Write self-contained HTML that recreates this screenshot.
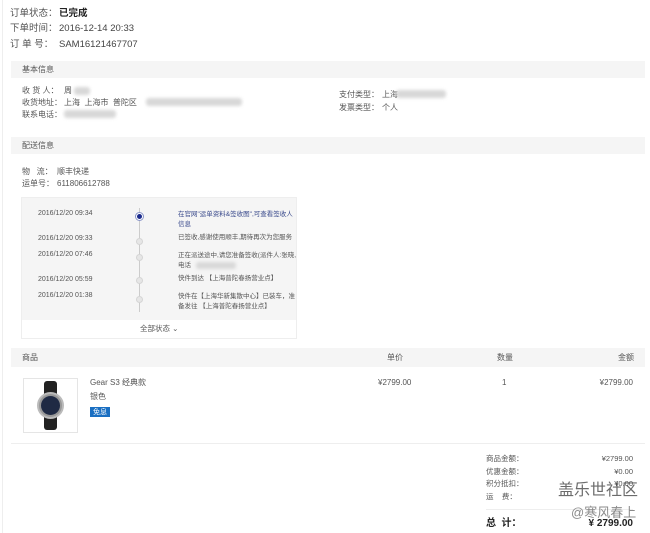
<!DOCTYPE html>
<html><head><meta charset="utf-8"><style>
*{margin:0;padding:0;box-sizing:border-box}
body{width:650px;height:533px;background:#fff;font-family:"Liberation Sans","Noto Sans CJK SC",sans-serif;color:#333;position:relative;overflow:hidden;font-size:8px}
.a{position:absolute;white-space:nowrap;line-height:1}
.bar{position:absolute;left:11px;width:634px;background:#f5f5f5}
.blur{position:absolute;background:#d8d8d8;border-radius:3px;filter:blur(1.5px)}
.g{color:#555}
.dot{position:absolute;left:114px;width:7px;height:7px;border-radius:50%;background:#e6e6e6;border:1px solid #d5d5d5}
</style></head><body>
<div style="position:absolute;left:2px;top:0;width:1px;height:533px;background:#eee"></div>
<div class="a" style="left:10px;top:9px;font-size:9.5px;color:#555">订单状态：</div>
<div class="a" style="left:59px;top:9px;font-size:9.5px;font-weight:bold;color:#222">已完成</div>
<div class="a" style="left:10px;top:24px;font-size:9.5px;color:#555">下单时间：</div>
<div class="a" style="left:59px;top:24px;font-size:9.5px;color:#444">2016-12-14 20:33</div>
<div class="a" style="left:10px;top:40px;font-size:9.5px;color:#555">订 单 号：</div>
<div class="a" style="left:59px;top:40px;font-size:9.5px;color:#444">SAM16121467707</div>

<div class="bar" style="top:61px;height:17px"></div>
<div class="a g" style="left:22px;top:66px">基本信息</div>
<div class="a g" style="left:22px;top:87px">收 货 人：</div><div class="a g" style="left:64px;top:87px">周</div><div class="blur" style="left:74px;top:87px;width:16px;height:8px"></div>
<div class="a g" style="left:22px;top:99px">收货地址：</div><div class="a g" style="left:64px;top:99px">上海 &nbsp;上海市 &nbsp;普陀区</div><div class="blur" style="left:146px;top:98px;width:96px;height:8px"></div>
<div class="a g" style="left:22px;top:111px">联系电话：</div><div class="blur" style="left:64px;top:110px;width:52px;height:8px"></div>
<div class="a g" style="left:339px;top:91px">支付类型：</div><div class="a g" style="left:382px;top:91px">上海</div><div class="blur" style="left:396px;top:90px;width:50px;height:8px"></div>
<div class="a g" style="left:339px;top:104px">发票类型：</div><div class="a g" style="left:382px;top:104px">个人</div>

<div class="bar" style="top:137px;height:17px"></div>
<div class="a g" style="left:22px;top:142px">配送信息</div>
<div class="a g" style="left:22px;top:168px">物 &nbsp;&nbsp;流：</div><div class="a g" style="left:57px;top:168px">顺丰快递</div>
<div class="a g" style="left:22px;top:180px">运单号：</div><div class="a g" style="left:57px;top:180px">611806612788</div>

<div style="position:absolute;left:21px;top:197px;width:276px;height:142px;border:1px solid #eee;background:#fff">
<div style="position:absolute;left:0;top:0;width:274px;height:122px;background:#f5f5f5"></div>
<div style="position:absolute;left:117px;top:10px;width:1px;height:104px;background:#ccc"></div>
<div style="position:absolute;left:113px;top:14px;width:9px;height:9px;border-radius:50%;background:#fff;border:1px solid #8a96c8"></div>
<div style="position:absolute;left:115px;top:16px;width:5px;height:5px;border-radius:50%;background:#1a2a8c"></div>
<div class="dot" style="top:40px"></div>
<div class="dot" style="top:56px"></div>
<div class="dot" style="top:79px"></div>
<div class="dot" style="top:98px"></div>
<div class="a g" style="left:16px;top:12px;font-size:7px">2016/12/20 09:34</div>
<div class="a g" style="left:16px;top:37px;font-size:7px">2016/12/20 09:33</div>
<div class="a g" style="left:16px;top:53px;font-size:7px">2016/12/20 07:46</div>
<div class="a g" style="left:16px;top:78px;font-size:7px">2016/12/20 05:59</div>
<div class="a g" style="left:16px;top:94px;font-size:7px">2016/12/20 01:38</div>
<div class="a" style="left:156px;top:12px;font-size:6.5px;color:#3a4a8c;line-height:10px">在官网"运单资料&amp;签收图",可查看签收人<br>信息</div>
<div class="a g" style="left:156px;top:37px;font-size:6.5px">已签收,感谢使用顺丰,期待再次为您服务</div>
<div class="a g" style="left:156px;top:53px;font-size:6.5px;line-height:10px">正在派送途中,请您准备签收(派件人:张晓,<br>电话</div>
<div class="blur" style="left:174px;top:64px;width:40px;height:7px"></div>
<div class="a g" style="left:156px;top:78px;font-size:6.5px">快件到达 【上海普陀春扬营业点】</div>
<div class="a g" style="left:156px;top:94px;font-size:6.5px;line-height:10px">快件在【上海华新集散中心】已装车，准<br>备发往 【上海普陀春扬营业点】</div>
<div class="a g" style="left:118px;top:127px;font-size:7.5px">全部状态 ⌄</div>
</div>

<div class="bar" style="top:348px;height:19px"></div>
<div class="a g" style="left:22px;top:354px">商品</div>
<div class="a g" style="left:387px;top:354px">单价</div>
<div class="a g" style="left:497px;top:354px">数量</div>
<div class="a g" style="left:618px;top:354px">金额</div>
<div style="position:absolute;left:23px;top:378px;width:55px;height:55px;border:1px solid #e5e5e5;background:#fff">
<div style="position:absolute;left:20px;top:2px;width:13px;height:49px;background:#222;border-radius:3px"></div>
<div style="position:absolute;left:13px;top:13px;width:27px;height:27px;border-radius:50%;background:#999;border:2px solid #bbb"></div>
<div style="position:absolute;left:17px;top:17px;width:19px;height:19px;border-radius:50%;background:#1f2a44"></div>
</div>
<div class="a g" style="left:90px;top:379px">Gear S3 经典款</div>
<div class="a g" style="left:90px;top:393px">银色</div>
<div class="a" style="left:90px;top:407px;background:#1a6fc2;color:#fff;font-size:7px;padding:1.5px 3px">免息</div>
<div class="a g" style="left:378px;top:379px">¥2799.00</div>
<div class="a g" style="left:502px;top:379px">1</div>
<div class="a g" style="right:17px;top:379px">¥2799.00</div>
<div style="position:absolute;left:11px;top:443px;width:634px;height:1px;background:#eee"></div>

<div class="a g" style="left:486px;top:455px;font-size:7.5px">商品金额：</div><div class="a g" style="right:17px;top:455px;font-size:7.5px">¥2799.00</div>
<div class="a g" style="left:486px;top:468px;font-size:7.5px">优惠金额：</div><div class="a g" style="right:17px;top:468px;font-size:7.5px">¥0.00</div>
<div class="a g" style="left:486px;top:480px;font-size:7.5px">积分抵扣：</div><div class="a g" style="right:17px;top:480px;font-size:7.5px">¥0.00</div>
<div class="a g" style="left:486px;top:493px;font-size:7.5px">运 &nbsp;&nbsp;&nbsp;费：</div>
<div style="position:absolute;left:486px;top:509px;width:147px;height:1px;background:#eee"></div>
<div class="a" style="left:486px;top:519px;font-size:10px;font-weight:bold;color:#222">总 &nbsp;计：</div>
<div class="a" style="right:17px;top:519px;font-size:10px;font-weight:bold;color:#222">¥ 2799.00</div>
<div class="a" style="left:558px;top:483px;font-size:16px;color:rgba(70,70,70,0.8)">盖乐世社区</div>
<div class="a" style="left:571px;top:506px;font-size:13px;color:rgba(100,100,100,0.75)">@寒风春上</div>
</body></html>
